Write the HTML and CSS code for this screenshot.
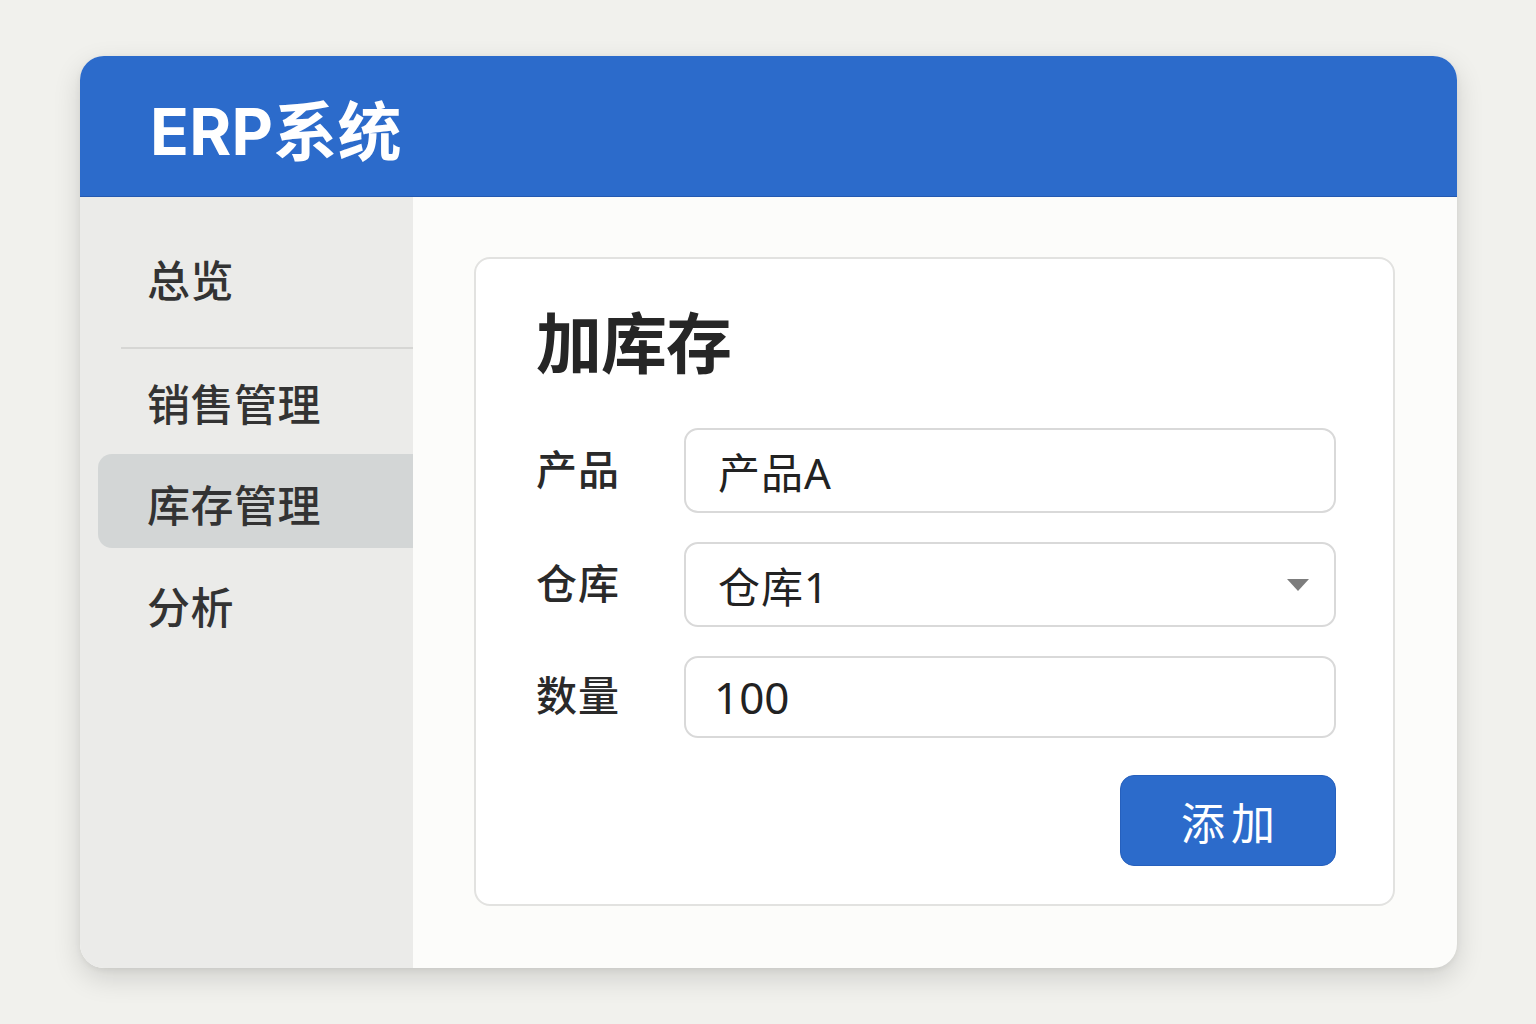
FILE: index.html
```html
<!DOCTYPE html>
<html lang="zh-CN">
<head>
<meta charset="utf-8">
<title>ERP系统</title>
<link rel="stylesheet" href="styles.css">
</head>
<body>
<div class="window">
  <header class="topbar">
    <h1 class="brand">ERP系统</h1>
  </header>
  <div class="body">
    <nav class="sidebar">
      <div class="nav-item first">总览</div>
      <div class="divider"></div>
      <div class="nav-item">销售管理</div>
      <div class="nav-item active">库存管理</div>
      <div class="nav-item last">分析</div>
    </nav>
    <main class="main">
      <section class="card">
        <h2 class="card-title">加库存</h2>
        <div class="form">
          <div class="row">
            <label class="label">产品</label>
            <div class="field">产品A</div>
          </div>
          <div class="row">
            <label class="label">仓库</label>
            <div class="field select">
              <span>仓库1</span>
              <svg class="caret" width="24" height="14" viewBox="0 0 24 14"><path d="M1 1 L23 1 L12 13 Z" fill="#7d7d7d"/></svg>
            </div>
          </div>
          <div class="row">
            <label class="label">数量</label>
            <div class="field num">100</div>
          </div>
        </div>
        <div class="actions">
          <button class="btn">添加</button>
        </div>
      </section>
    </main>
  </div>
</div>
</body>
</html>
```
FILE: styles.css
```css
* { box-sizing: border-box; }
html, body { margin: 0; padding: 0; }
body {
  width: 1536px;
  height: 1024px;
  background: #f1f1ed;
  font-family: "Noto Sans", "Noto Sans CJK SC", sans-serif;
  color: #2a2a2a;
  padding: 56px 79px 56px 80px;
}
.window {
  width: 1377px;
  height: 912px;
  border-radius: 24px;
  overflow: hidden;
  display: flex;
  flex-direction: column;
  box-shadow: 0 10px 28px rgba(0, 0, 0, 0.14), 0 2px 6px rgba(0, 0, 0, 0.06);
  background: #fcfcfa;
}
.topbar {
  height: 141px;
  flex: none;
  background: #2c6bcb;
  display: flex;
  align-items: center;
  padding-left: 70px;
  border-bottom: 1px solid #2459b0;
}
.brand {
  margin: 0;
  color: #fff;
  font-family: Inter, "Noto Sans CJK SC", sans-serif;
  font-size: 64px;
  font-weight: 700;
  line-height: 1;
  letter-spacing: 0.3px;
  padding-top: 12px;
}
.body {
  flex: 1;
  display: flex;
  min-height: 0;
}
.sidebar {
  width: 333px;
  flex: none;
  background: #ebebe9;
  padding-top: 32px;
  display: flex;
  flex-direction: column;
}
.nav-item {
  height: 94px;
  display: flex;
  align-items: center;
  padding-left: 67px;
  font-size: 43px;
  font-weight: 500;
  color: #333;
  letter-spacing: 0.5px;
}
.nav-item.first { height: 98px; }
.divider {
  height: 2px;
  background: #d6d6d4;
  margin: 20px 0 6px 41px;
}
.nav-item.active {
  margin-top: 5px;
  margin-left: 18px;
  padding-left: 49px;
  padding-top: 4px;
  background: #d3d6d6;
  border-radius: 14px 0 0 14px;
}
.nav-item.last { margin-top: 10px; }
.main {
  flex: 1;
  padding: 60px 62px 62px 61px;
  display: flex;
}
.card {
  flex: 1;
  background: #fff;
  border: 2px solid #e2e2e0;
  border-radius: 16px;
  padding: 50px 57px 0 60px;
  display: flex;
  flex-direction: column;
}
.card-title {
  margin: 0;
  font-size: 66px;
  font-weight: 700;
  line-height: 66px;
  color: #262626;
  letter-spacing: -1px;
}
.form {
  margin-top: 53px;
  display: flex;
  flex-direction: column;
  gap: 29px;
}
.row {
  display: grid;
  grid-template-columns: 148px 1fr;
  align-items: center;
}
.label {
  font-size: 41px;
  font-weight: 500;
  color: #2a2a2a;
  margin-top: -8px;
  letter-spacing: 1px;
}
.field {
  height: 85px;
  border: 2px solid #d9d9d9;
  border-radius: 14px;
  background: #fff;
  display: flex;
  align-items: center;
  padding-left: 32px;
  padding-right: 24px;
  font-size: 42px;
  color: #222;
  letter-spacing: 1px;
}
.field.num {
  height: 82px;
  font-size: 44px;
  padding-left: 28px;
  letter-spacing: 0;
}
.select {
  justify-content: space-between;
}
.caret { display: block; }
.actions {
  margin-top: 37px;
  display: flex;
  justify-content: flex-end;
}
.btn {
  width: 216px;
  height: 91px;
  background: #2c6bcb;
  border: 1px solid #2660bd;
  border-radius: 14px;
  color: #fff;
  font-family: "Noto Sans", "Noto Sans CJK SC", sans-serif;
  font-size: 44px;
  font-weight: 400;
  letter-spacing: 6px;
  padding: 0 0 0 6px;
  cursor: pointer;
}
```
